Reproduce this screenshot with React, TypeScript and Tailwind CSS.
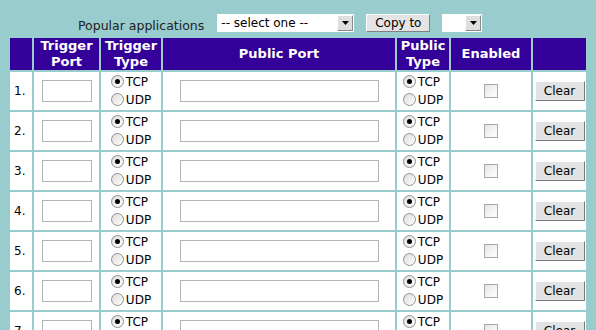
import React from "react";

const ROWS = [1, 2, 3, 4, 5, 6, 7, 8];
const COLS = "grid-cols-[22px_65px_60px_232px_52px_80px_53px]";

function Radio({ checked, label }: { checked?: boolean; label: string }) {
  return (
    <div className="flex h-[18px] items-center gap-[2px]">
      <span className="flex h-[13px] w-[13px] items-center justify-center rounded-full border border-[#8f8f8f] bg-gradient-to-br from-[#dcdcdc] to-white">
        {checked && <span className="h-[5px] w-[5px] rounded-full bg-black" />}
      </span>
      <span>{label}</span>
    </div>
  );
}

function TypeCell() {
  return (
    <div className="flex items-center justify-center bg-white">
      <div className="flex flex-col">
        <Radio checked label="TCP" />
        <Radio label="UDP" />
      </div>
    </div>
  );
}

function Select({ width, text }: { width: string; text?: string }) {
  return (
    <div className={`flex h-[18px] items-center justify-between bg-white pl-[4px] pr-[1px] ${width}`}>
      <span className="text-[12px] leading-none text-black">{text}</span>
      <span className="flex h-[16px] w-[16px] items-center justify-center border border-t-white border-l-white border-r-[#8a8a8a] border-b-[#8a8a8a] bg-[#dedede]">
        <svg width="7" height="4" viewBox="0 0 7 4">
          <path d="M0 0h7L3.5 4z" fill="#000" />
        </svg>
      </span>
    </div>
  );
}

function Head({ children }: { children: React.ReactNode }) {
  return (
    <div className="flex items-center justify-center bg-[#330099] text-center text-[13px] font-bold leading-[16px] text-white">
      {children}
    </div>
  );
}

export default function App() {
  return (
    <div className="min-h-[330px] bg-[#99cccc] font-['DejaVu_Sans',Verdana,sans-serif] text-[12px] text-black">
      <div className="flex items-center pl-[78px] pt-[14px]">
        <span className="mr-[13px] mt-[6px] text-[12.5px] leading-none text-[#222]">Popular applications</span>
        <Select width="w-[137px]" text="-- select one --" />
        <button className="ml-[12px] h-[18px] w-[64px] border border-t-white border-l-white border-r-[#808080] border-b-[#808080] bg-[#e4e4e4] text-[12px] leading-none">
          Copy to
        </button>
        <div className="ml-[12px]">
          <Select width="w-[40px]" />
        </div>
      </div>

      <div className={`mx-[10px] mt-[5px] grid ${COLS} gap-[2px]`}>
        <Head>{""}</Head>
        <Head>
          Trigger
          <br />
          Port
        </Head>
        <Head>
          Trigger
          <br />
          Type
        </Head>
        <Head>Public Port</Head>
        <Head>
          Public
          <br />
          Type
        </Head>
        <Head>Enabled</Head>
        <Head>{""}</Head>

        {ROWS.map((n) => (
          <React.Fragment key={n}>
            <div className="flex h-[38px] items-center bg-white pl-[4px]">{n}.</div>
            <div className="flex items-center justify-center bg-white">
              <div className="h-[22px] w-[50px] border border-[#b4b4b4] bg-white" />
            </div>
            <TypeCell />
            <div className="flex items-center justify-center bg-white">
              <div className="h-[22px] w-[199px] border border-[#b4b4b4] bg-white" />
            </div>
            <TypeCell />
            <div className="flex items-center justify-center bg-white">
              <span className="h-[14px] w-[14px] border border-[#a8a8a8] bg-gradient-to-br from-[#e6e6e6] to-white" />
            </div>
            <div className="flex items-center justify-center bg-white">
              <button className="h-[20px] w-[50px] border border-t-white border-l-white border-r-[#7a7a7a] border-b-[#7a7a7a] bg-[#e2e2e2] text-[12px] leading-none">
                Clear
              </button>
            </div>
          </React.Fragment>
        ))}
      </div>
    </div>
  );
}
